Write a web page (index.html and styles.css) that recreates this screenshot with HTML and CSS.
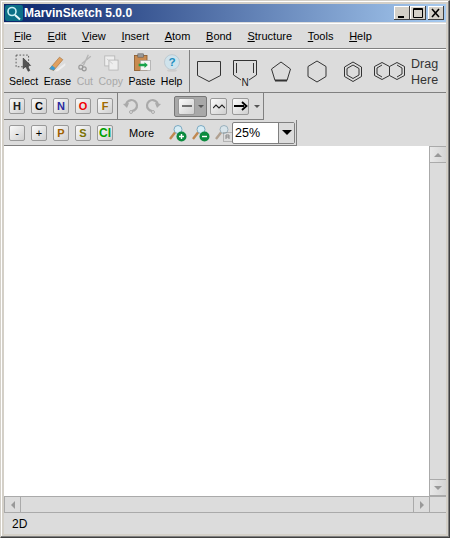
FILE: index.html
```html
<!DOCTYPE html>
<html lang="en">
<head>
    <title>MarvinSketch 5.0.0</title>
    <link rel="stylesheet" href="styles.css">
</head>
<body>
    <div class="window">
        <div class="titlebar">
            <svg class="app-icon" width="18" height="16" viewBox="0 0 18 16">
                <rect x="0" y="0" width="18" height="16" rx="2" fill="#0c6f86"/>
                <circle cx="7" cy="6.500" r="4" fill="#0c6f86" stroke="#c9f0f5" stroke-width="1.600"/>
                <path d="M10 10l5 4.500" stroke="#e8f6f8" stroke-width="2"/>
            </svg>
            <span class="title-text">MarvinSketch 5.0.0</span>
            <div class="win-buttons">
                <div class="win-btn"><svg width="16" height="14" viewBox="0 0 16 14"><rect x="4" y="10" width="6" height="2" fill="#000"/></svg></div>
                <div class="win-btn"><svg width="16" height="14" viewBox="0 0 16 14"><path d="M3.500 2.500h9v9h-9zM3 3.500h10" fill="none" stroke="#000"/></svg></div>
                <div class="win-btn win-close"><svg width="16" height="14" viewBox="0 0 16 14"><path d="M4 3l7 8M11 3l-7 8" stroke="#000" stroke-width="1.600"/></svg></div>
            </div>
        </div>

        <div class="menubar">
            <span class="menu-item"><u>F</u>ile</span>
            <span class="menu-item"><u>E</u>dit</span>
            <span class="menu-item"><u>V</u>iew</span>
            <span class="menu-item"><u>I</u>nsert</span>
            <span class="menu-item"><u>A</u>tom</span>
            <span class="menu-item"><u>B</u>ond</span>
            <span class="menu-item"><u>S</u>tructure</span>
            <span class="menu-item"><u>T</u>ools</span>
            <span class="menu-item"><u>H</u>elp</span>
        </div>

        <div class="toolbar-main">
            <div class="edit-tools">
                <div class="tool">
                    <svg width="20" height="20" viewBox="0 0 24 24">
                        <rect x="2.500" y="2.500" width="15" height="14" fill="none" stroke="#444" stroke-dasharray="2 2"/>
                        <path d="M11 6l0 13 3-3 3 6 2-1-3-6 4 0z" fill="#555" stroke="#222" stroke-width=".6"/>
                    </svg>
                    <span>Select</span>
                </div>
                <div class="tool">
                    <svg width="20" height="20" viewBox="0 0 24 24">
                        <path d="M3 19l12-14 4 3-11 13z" fill="#e0a060" stroke="#a06a30" stroke-width=".7"/>
                        <path d="M3 19l3-4 4 3-2 3z" fill="#3a9ad0"/>
                        <path d="M9 22l13-10v3l-9 7z" fill="#eee"/>
                    </svg>
                    <span>Erase</span>
                </div>
                <div class="tool disabled">
                    <svg width="20" height="20" viewBox="0 0 24 24">
                        <path d="M16 2l-6 13M19 4l-11 9" stroke="#b5b5b5" stroke-width="1.600" fill="none"/>
                        <circle cx="7" cy="17" r="2.400" fill="none" stroke="#999" stroke-width="1.400"/>
                        <circle cx="11" cy="19" r="2.400" fill="none" stroke="#999" stroke-width="1.400"/>
                    </svg>
                    <span>Cut</span>
                </div>
                <div class="tool disabled">
                    <svg width="20" height="20" viewBox="0 0 24 24">
                        <rect x="4.500" y="3.500" width="12" height="12" fill="#eee" stroke="#b5b5b5"/>
                        <rect x="9.500" y="8.500" width="11" height="12" fill="#eee" stroke="#b5b5b5"/>
                        <path d="M7 7l7 6" stroke="#c8c8c8"/>
                    </svg>
                    <span>Copy</span>
                </div>
                <div class="tool">
                    <svg width="20" height="20" viewBox="0 0 24 24">
                        <rect x="3" y="3" width="15" height="18" fill="#c98b50" stroke="#8a5a2c"/>
                        <rect x="7" y="1" width="7" height="4" fill="#999" stroke="#555" stroke-width=".6"/>
                        <rect x="10" y="9" width="12" height="12" fill="#f4f4f4" stroke="#999" stroke-width=".7"/>
                        <path d="M8 13h7v-2l4 3.500-4 3.500v-2h-7z" fill="#17a34a"/>
                    </svg>
                    <span>Paste</span>
                </div>
                <div class="tool">
                    <svg width="20" height="20" viewBox="0 0 24 24">
                        <circle cx="12" cy="11" r="9" fill="#cfe3ec" stroke="#b8c4cc"/>
                        <text x="12" y="16" class="help-mark">?</text>
                        <ellipse cx="12" cy="21" rx="6" ry="1.500" fill="#ccc"/>
                    </svg>
                    <span>Help</span>
                </div>
            </div>
            <div class="templates">
                <svg class="tpl tpl-house" width="26" height="23" viewBox="0 0 26 23" fill="none" stroke="#333">
                    <path d="M1.500 1.500h23v14l-11.500 6-11.500-6z"/>
                </svg>
                <svg class="tpl tpl-pyrrole" width="26" height="28" viewBox="0 0 26 28" fill="none" stroke="#333">
                    <path d="M9 21l-7.500-5V1.500h23V16L17 21M4.500 4v10M21.500 4v10"/>
                    <text x="13" y="27" class="tpl-n">N</text>
                </svg>
                <svg class="tpl tpl-penta" width="22" height="21" viewBox="0 0 22 21" fill="none" stroke="#333">
                    <path d="M11 1L20.500 8 17 19.500H5L1.500 8z"/>
                    <path d="M5 19.500h12" stroke-width="2"/>
                </svg>
                <svg class="tpl tpl-hexa" width="20" height="23" viewBox="0 0 20 23" fill="none" stroke="#333">
                    <path d="M10 1l9 5.500v10l-9 5.500-9-5.500v-10z"/>
                </svg>
                <svg class="tpl tpl-benzene" width="20" height="21" viewBox="0 0 20 21" fill="none" stroke="#333">
                    <path d="M10 1l8.500 5v9.500l-8.500 5-8.500-5V6zM10 4l6 3.500v6.500l-6 3.500-6-3.500V7.500z"/>
                </svg>
                <svg class="tpl tpl-naph" width="31" height="20" viewBox="0 0 31 20" fill="none" stroke="#333">
                    <path d="M8 1.500l7.500 4 7.500-4 7.500 4v9l-7.500 4-7.500-4-7.500 4-7.500-4v-9zM15.500 5.500v9M8 4L3 7v6l5 3M23 4l5 3v6l-5 3"/>
                </svg>
                <div class="drag-here">Drag<br>Here</div>
            </div>
        </div>

        <div class="toolbar-atoms">
            <div class="atoms">
                <div class="atom atom-h">H</div>
                <div class="atom atom-c">C</div>
                <div class="atom atom-n">N</div>
                <div class="atom atom-o">O</div>
                <div class="atom atom-f">F</div>
            </div>
            <div class="draw-tools">
                <svg class="undo" width="16" height="16" viewBox="0 0 16 16" fill="none" stroke="#aaa" stroke-width="2.200">
                    <path d="M3 8a5.500 5.500 0 1 1 6 5"/><circle cx="8" cy="14" r="1.500" stroke-width="1"/><path d="M0 6l4 4 2-5z" fill="#aaa" stroke="none"/>
                </svg>
                <svg class="redo" width="16" height="16" viewBox="0 0 16 16" fill="none" stroke="#aaa" stroke-width="2.200">
                    <path d="M13 8a5.500 5.500 0 1 0-6 5"/><circle cx="8" cy="14" r="1.500" stroke-width="1"/><path d="M16 6l-4 4-2-5z" fill="#aaa" stroke="none"/>
                </svg>
                <div class="bond-active">
                    <div class="atom bond-btn"><svg width="12" height="12" viewBox="0 0 12 12"><path d="M1 6h10" stroke="#222" stroke-width="1.200"/></svg></div>
                    <span class="arrow-down small"></span>
                </div>
                <div class="atom bond-btn wave-btn"><svg width="12" height="12" viewBox="0 0 12 12"><path d="M0 8l3-3 3 3 3-3 3 3" fill="none" stroke="#222" stroke-width="1.100"/></svg></div>
                <div class="atom bond-btn arrow-btn"><svg width="14" height="12" viewBox="0 0 14 12"><path d="M0 6h10M8 2l4.500 4L8 10" fill="none" stroke="#000" stroke-width="1.800"/></svg></div>
                <span class="arrow-down small arrow-last"></span>
            </div>
        </div>

        <div class="toolbar-more">
            <div class="atom atom-minus">-</div>
            <div class="atom atom-plus">+</div>
            <div class="atom atom-p">P</div>
            <div class="atom atom-s">S</div>
            <div class="atom atom-cl">Cl</div>
            <span class="more-label">More</span>
            <svg class="zoom-icon" width="18" height="18" viewBox="0 0 18 18">
                <circle cx="9" cy="5.500" r="4" fill="#d8edf5" stroke="#7aa8c0"/>
                <path d="M6 8.500L1 15" stroke="#c08850" stroke-width="2.400"/>
                <circle cx="12.500" cy="12.500" r="5" fill="#0c8a3e"/>
                <path d="M10 12.500h5M12.500 10v5" stroke="#fff" stroke-width="1.400"/>
            </svg>
            <svg class="zoom-icon" width="18" height="18" viewBox="0 0 18 18">
                <circle cx="9" cy="5.500" r="4" fill="#d8edf5" stroke="#7aa8c0"/>
                <path d="M6 8.500L1 15" stroke="#c08850" stroke-width="2.400"/>
                <circle cx="12.500" cy="12.500" r="5" fill="#0c8a3e"/>
                <path d="M10 12.500h5" stroke="#fff" stroke-width="1.400"/>
            </svg>
            <svg class="zoom-icon" width="18" height="18" viewBox="0 0 18 18">
                <circle cx="9" cy="5.500" r="4" fill="#d8e4ea" stroke="#9ab0bc"/>
                <path d="M6 8.500L1 15" stroke="#b0a090" stroke-width="2.400"/>
                <rect x="8.500" y="8.500" width="9" height="9" fill="none" stroke="#888" stroke-dasharray="1 1"/>
                <path d="M11 15v-4h3v4M11 13h3" fill="none" stroke="#888"/>
            </svg>
            <div class="combo">
                <div class="combo-value">25%</div>
                <div class="combo-button"><span class="arrow-down"></span></div>
            </div>
        </div>

        <div class="canvas-area">
            <div class="canvas-row">
                <div class="canvas"></div>
                <div class="vscroll">
                    <div class="scroll-btn"><span class="arrow-up-grey"></span></div>
                    <div class="scroll-track"></div>
                    <div class="scroll-btn"><span class="arrow-down-grey"></span></div>
                </div>
            </div>
            <div class="hscroll">
                <div class="scroll-btn-h"><span class="arrow-left-grey"></span></div>
                <div class="scroll-track"></div>
                <div class="scroll-btn-h"><span class="arrow-right-grey"></span></div>
                <div class="scroll-corner"></div>
            </div>
        </div>

        <div class="statusbar">2D</div>
    </div>
</body>
</html>
```

FILE: styles.css
```css
html, body {
    margin: 0;
    padding: 0;
}
body {
    width: 450px;
    height: 538px;
    overflow: hidden;
    font-family: "Liberation Sans", Arial, sans-serif;
    font-size: 12px;
    color: #000;
}
.window {
    box-sizing: border-box;
    width: 450px;
    height: 538px;
    display: flex;
    flex-direction: column;
    background-color: #dcdcdc;
    border-style: solid;
    border-width: 1px;
    border-color: #d4d0c8 #404040 #404040 #d4d0c8;
    padding: 3px;
    box-shadow: inset -1px -1px 0 #808080, inset 1px 1px 0 #fff, inset 0 0 0 3px #d4d0c8;
}

/* title */
.titlebar {
    height: 18px;
    flex: none;
    display: flex;
    align-items: center;
    background: linear-gradient(to right, #0a246a, #a6caf0);
    color: white;
}
.app-icon {
    flex: none;
    margin-left: 1px;
}
.title-text {
    margin-left: 1px;
    font-size: 12px;
    font-weight: bold;
}
.win-buttons {
    margin-left: auto;
    margin-right: 2px;
    display: flex;
}
.win-close {
    margin-left: 2px;
}
.win-btn {
    box-sizing: border-box;
    width: 16px;
    height: 14px;
    background-color: #d4d0c8;
    box-shadow: inset -1px -1px 0 #404040, inset 1px 1px 0 #fff;
}
.win-btn svg {
    display: block;
}

/* menu */
.menubar {
    flex: none;
    height: 26px;
    margin-top: 1px;
    display: flex;
    align-items: center;
    padding-left: 10px;
    gap: 15.700px;
    border-bottom: 1px solid #808080;
    box-shadow: inset 0 1px 0 #fff;
    font-size: 11px;
    box-sizing: border-box;
}

/* main toolbar */
.toolbar-main {
    flex: none;
    height: 44px;
    box-sizing: border-box;
    display: flex;
    border-top: 1px solid #fff;
    border-bottom: 1px solid #808080;
}
.edit-tools {
    width: 186px;
    flex: none;
    display: flex;
    gap: 5.500px;
    padding-left: 5px;
    box-sizing: border-box;
    border-right: 1px solid #808080;
}
.tool {
    display: flex;
    flex-direction: column;
    align-items: center;
    font-size: 10.500px;
    padding-top: 3px;
}
.tool span {
    line-height: 13px;
}
.tool svg {
    display: block;
    margin: 0 -2px 2px;
}
.disabled {
    color: #a8a8a8;
}
.help-mark {
    font-size: 14px;
    font-weight: bold;
    fill: #1e8fc0;
    text-anchor: middle;
}
.templates {
    flex: 1;
    display: flex;
    align-items: center;
    padding-left: 6px;
}
.tpl {
    flex: none;
}
.tpl-pyrrole {
    margin-left: 10px;
    margin-top: 4px;
}
.tpl-penta {
    margin-left: 12px;
}
.tpl-hexa {
    margin-left: 15px;
}
.tpl-benzene {
    margin-left: 16px;
}
.tpl-naph {
    margin-left: 11px;
}
.tpl-n {
    font-family: "Liberation Sans", sans-serif;
    font-size: 10px;
    fill: #222;
    stroke: none;
    text-anchor: middle;
}
.drag-here {
    margin-left: 6px;
    margin-top: 2px;
    font-size: 12.500px;
    line-height: 16px;
    color: #333;
}

/* atom rows */
.toolbar-atoms {
    flex: none;
    height: 27px;
    width: 260px;
    box-sizing: border-box;
    display: flex;
    border-right: 1px solid #808080;
    border-bottom: 1px solid #808080;
}
.atoms {
    width: 114px;
    flex: none;
    display: flex;
    align-items: center;
    gap: 6px;
    padding-left: 5px;
    box-sizing: border-box;
    border-right: 1px solid #808080;
}
.atom {
    box-sizing: border-box;
    width: 16px;
    height: 16px;
    flex: none;
    display: flex;
    align-items: center;
    justify-content: center;
    border: 1px solid #999;
    border-radius: 2px;
    background: linear-gradient(135deg, #fafafa, #cfcfcf);
    font-size: 11px;
    font-weight: bold;
}
.atom-h { color: #222; }
.atom-c { color: #000; }
.atom-n { color: #2a2aa0; }
.atom-o { color: #f00000; }
.atom-f { color: #a06a00; }
.atom-p { color: #a06000; }
.atom-s { color: #7a7000; }
.atom-cl { color: #00a000; font-size: 12px; }
.atom-minus, .atom-plus { font-weight: normal; }
.draw-tools {
    flex: 1;
    display: flex;
    align-items: center;
    padding-left: 5px;
}
.redo {
    margin-left: 6px;
}
.bond-active {
    box-sizing: border-box;
    width: 33px;
    height: 21px;
    margin-left: 13px;
    display: flex;
    align-items: center;
    padding-left: 3px;
    border: 1px solid #777;
    border-radius: 2px;
    background-color: #a8a8a8;
}
.bond-btn {
    width: 17px;
    height: 17px;
}
.wave-btn {
    margin-left: 3px;
}
.arrow-btn {
    margin-left: 5px;
}
.arrow-down {
    display: block;
    width: 0;
    height: 0;
    border-left: 5px solid transparent;
    border-right: 5px solid transparent;
    border-top: 5px solid #000;
}
.arrow-down.small {
    border-left-width: 3px;
    border-right-width: 3px;
    border-top: 3px solid #555;
    margin-left: 3px;
}
.arrow-down.arrow-last {
    margin-left: 5px;
}
.toolbar-more {
    flex: none;
    height: 26px;
    width: 293px;
    box-sizing: border-box;
    display: flex;
    align-items: center;
    padding-left: 5px;
    gap: 6px;
    border-right: 1px solid #808080;
    border-bottom: 1px solid #808080;
}
.more-label {
    margin-left: 10px;
    width: 34px;
    font-size: 11px;
}
.zoom-icon {
    flex: none;
    margin-right: -1px;
}
.combo {
    display: flex;
    flex: none;
    width: 63px;
    height: 22px;
    margin-left: -6px;
    box-sizing: border-box;
    border: 1px solid #808080;
    border-radius: 2px;
    background-color: white;
}
.combo-value {
    flex: 1;
    padding-left: 2px;
    line-height: 20px;
    font-size: 12.500px;
}
.combo-button {
    width: 15px;
    display: flex;
    align-items: center;
    justify-content: center;
    background-color: #dcdcdc;
    border-left: 1px solid #808080;
}

/* canvas and scrollbars */
.canvas-area {
    flex: none;
    height: 367px;
    display: flex;
    flex-direction: column;
}
.canvas-row {
    flex: 1;
    display: flex;
    min-height: 0;
}
.canvas {
    flex: 1;
    background-color: white;
}
.vscroll {
    width: 16px;
    flex: none;
    display: flex;
    flex-direction: column;
    background-color: #dcdcdc;
    border-left: 1px solid #aaa;
}
.scroll-btn {
    height: 15px;
    display: flex;
    align-items: center;
    justify-content: center;
    border-bottom: 1px solid #aaa;
    border-top: 1px solid #aaa;
    background: linear-gradient(to right, #e8e8e8, #d4d4d4);
}
.scroll-track {
    flex: 1;
}
.hscroll {
    height: 17px;
    flex: none;
    display: flex;
    box-sizing: border-box;
    border-top: 1px solid #aaa;
    border-bottom: 1px solid #aaa;
}
.scroll-btn-h {
    width: 15px;
    display: flex;
    align-items: center;
    justify-content: center;
    border-left: 1px solid #aaa;
    border-right: 1px solid #aaa;
}
.scroll-corner {
    width: 16px;
    flex: none;
}
.arrow-up-grey, .arrow-down-grey, .arrow-left-grey, .arrow-right-grey {
    display: block;
    width: 0;
    height: 0;
    border: 4px solid transparent;
}
.arrow-up-grey { border-bottom-color: #999; border-top-width: 0; }
.arrow-down-grey { border-top-color: #999; border-bottom-width: 0; }
.arrow-left-grey { border-right-color: #999; border-left-width: 0; }
.arrow-right-grey { border-left-color: #999; border-right-width: 0; }

/* status */
.statusbar {
    flex: 1;
    display: flex;
    align-items: center;
    padding-left: 8px;
    font-size: 12px;
}
```
